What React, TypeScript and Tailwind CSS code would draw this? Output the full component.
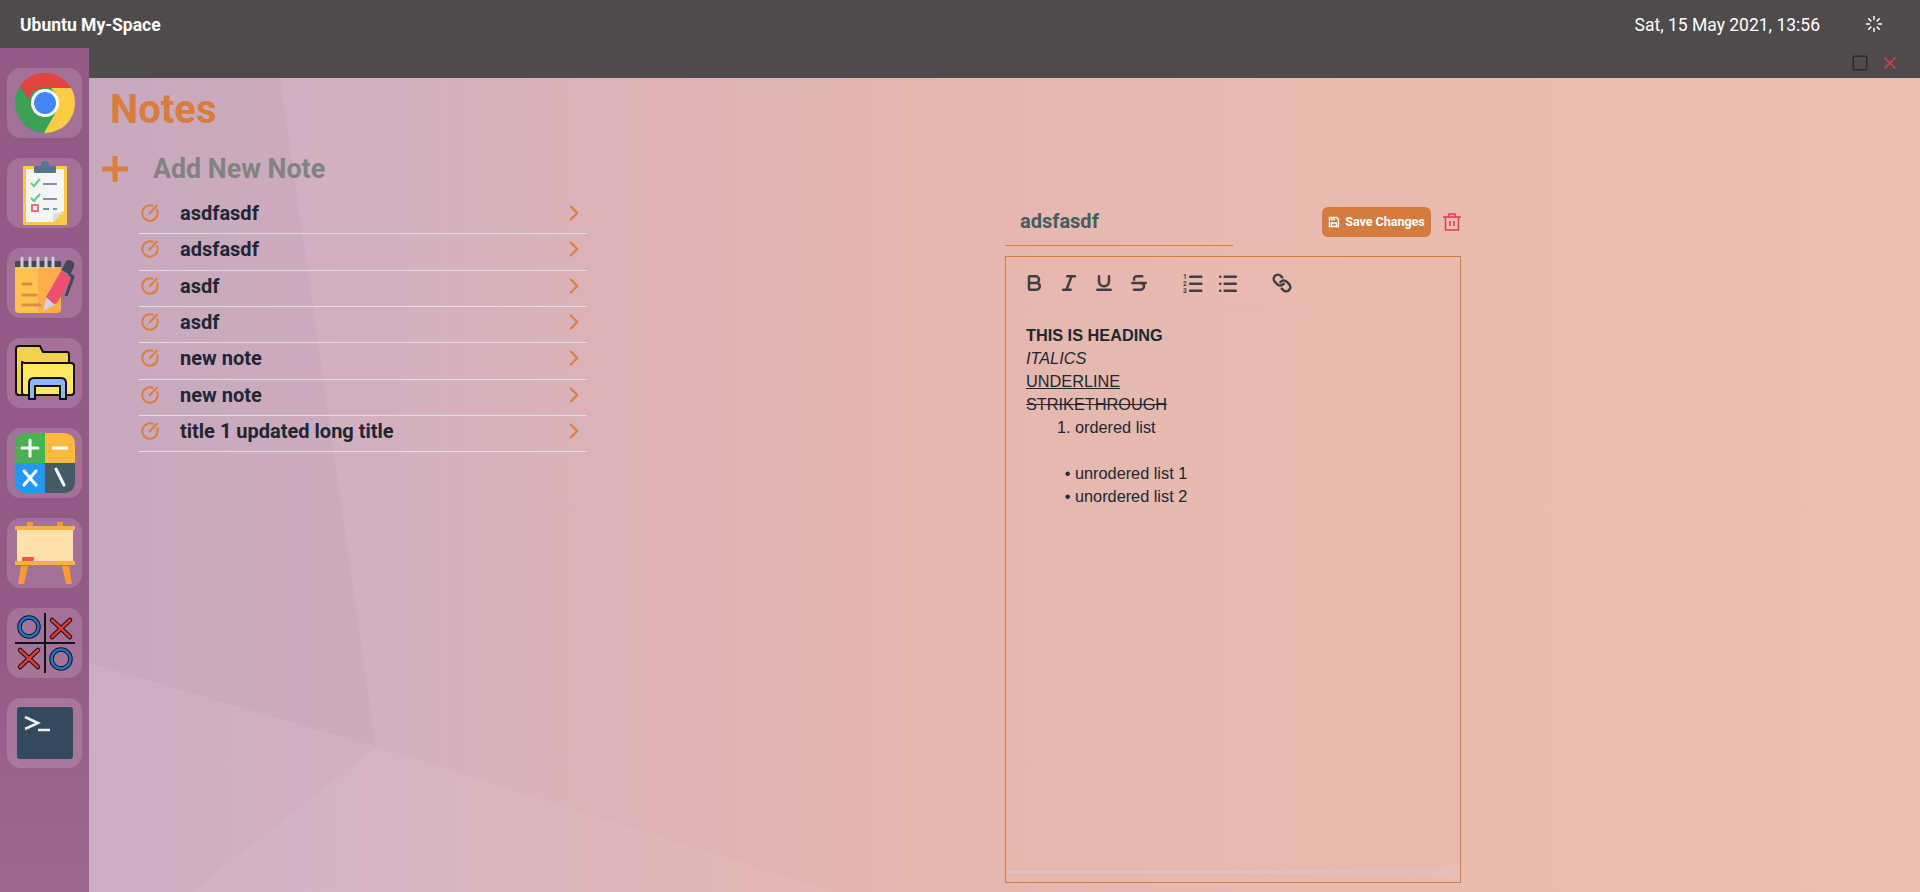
import { Bold, ChevronRight, Italic, Link, Loader, Square, Strikethrough, Underline, X } from 'lucide-react';

const notes = ['asdfasdf', 'adsfasdf', 'asdf', 'asdf', 'new note', 'new note', 'title 1 updated long title'];

function ChromeIcon() {
  return (
    <svg viewBox="0 0 60 60" className="w-[60px] h-[60px]">
      <circle cx="30" cy="30" r="30" fill="#3ba156" />
      <path d="M5 13A30 30 0 0 1 56 15L30 15Q17 15 14 27Z" fill="#e0453f" />
      <path d="M56 15A30 30 0 0 1 29 60L42 37Q46 25 36 15Z" fill="#fecb46" />
      <circle cx="30" cy="30" r="14" fill="#ffffff" />
      <circle cx="30" cy="30" r="11" fill="#4286f5" />
    </svg>
  );
}

function TodoIcon() {
  return (
    <svg viewBox="0 0 60 64" className="w-[60px] h-[64px]">
      <rect x="8" y="5" width="44" height="59" rx="1" fill="#fcc84a" />
      <path d="M11 8H49V50L38 61H11Z" fill="#f5f5f5" />
      <path d="M38 61L49 50V61Z" fill="#f2cf4a" />
      <path d="M38 61V53L49 50Z" fill="#dddddd" />
      <rect x="19" y="5" width="22" height="7" rx="1" fill="#53758f" />
      <circle cx="30" cy="4" r="4" fill="#53758f" />
      <path d="M16 22L19 25L25 18M16 37L19 40L25 33" fill="none" stroke="#53d18a" strokeWidth="2" />
      <path d="M28 23H42M28 38H42M28 48H34M38 48H42" stroke="#53758f" strokeWidth="1.6" />
      <rect x="17" y="44" width="6" height="6" fill="none" stroke="#f26d7d" strokeWidth="2" />
    </svg>
  );
}

function NoteIcon() {
  return (
    <svg viewBox="0 0 60 60" className="w-[60px] h-[60px]">
      <path d="M0 12Q0 8 4 8H23V60H4Q0 60 0 56Z" fill="#fec34e" />
      <path d="M23 8H46V56Q46 60 42 60H23Z" fill="#fdae4b" />
      <path d="M0 14V9Q0 8 4 8H46V14Z" fill="#3f4a54" />
      <path d="M7 5V14M15 5V14M23 5V14M31 5V14M38 5V14" stroke="#c9cfdc" strokeWidth="3" strokeLinecap="round" />
      <path d="M8 31H16M8 42H21M8 52H25" stroke="#dd8b45" strokeWidth="3" strokeLinecap="round" />
      <path d="M33 53L28 58L31 44L46 18L57 25L42 50Z" fill="#ec4f71" />
      <path d="M31 44L28 58L40 52Z" fill="#cfd4e2" />
      <path d="M50 10Q52 5 57 8Q61 10 58 16L55 22L47 17Z" fill="#3f4a54" />
      <path d="M54 21L58 24L51 43" fill="none" stroke="#3f4a54" strokeWidth="3" />
    </svg>
  );
}

function FolderIcon() {
  return (
    <svg viewBox="0 0 60 56" className="w-[60px] h-[56px]">
      <path d="M1 4Q1 1 4 1H25L28 7H52Q54 7 54 10V18H12V50H4Q1 50 1 47Z" fill="#f2d24c" stroke="#111111" strokeWidth="2" />
      <path d="M7 16Q7 18 10 18H56Q59 18 59 21V47Q59 50 56 50H9Q7 50 7 47Z" fill="#fde95f" stroke="#111111" strokeWidth="2" />
      <path d="M14 54V38Q14 33 19 33H46Q51 33 51 38V54H45V41H20V54Z" fill="#8db8f0" stroke="#111111" strokeWidth="2" />
    </svg>
  );
}

function CalcIcon() {
  return (
    <svg viewBox="0 0 60 60" className="w-[60px] h-[60px]">
      <path d="M0 30V12Q0 0 12 0H30V30Z" fill="#4caf50" />
      <path d="M30 0H48Q60 0 60 12V30H30Z" fill="#ffb93f" />
      <path d="M0 30H30V60H12Q0 60 0 48Z" fill="#2397f3" />
      <path d="M30 30H60V48Q60 60 48 60H30Z" fill="#455a64" />
      <path d="M15 7V23M7 15H23M38 15H52M9 38L21 52M21 38L9 52M41 36L49 52" stroke="#ffffff" strokeWidth="3" strokeLinecap="round" />
    </svg>
  );
}

function BoardIcon() {
  return (
    <svg viewBox="0 0 60 62" className="w-[60px] h-[62px]">
      <path d="M12 0H18V8H12ZM42 0H48V8H42Z" fill="#fb9a35" />
      <path d="M6 44L3 62H9L13 44ZM47 44L51 62H57L54 44Z" fill="#fb9a35" />
      <rect x="2" y="8" width="56" height="34" fill="#fde0ab" />
      <rect x="0" y="4" width="60" height="4" fill="#fdb04a" />
      <rect x="0" y="39" width="60" height="4" fill="#fdb04a" />
      <rect x="7" y="35" width="12" height="4" rx="1" fill="#ea5a47" />
    </svg>
  );
}

function TicTacIcon() {
  return (
    <svg viewBox="0 0 60 60" className="w-[60px] h-[60px]">
      <path d="M30 0V60M0 30H60" stroke="#111111" strokeWidth="2" />
      <circle cx="14" cy="14" r="9.5" fill="none" stroke="#111111" strokeWidth="4.5" />
      <circle cx="14" cy="14" r="9.5" fill="none" stroke="#1976d2" strokeWidth="2.5" />
      <circle cx="46" cy="46" r="9.5" fill="none" stroke="#111111" strokeWidth="4.5" />
      <circle cx="46" cy="46" r="9.5" fill="none" stroke="#1976d2" strokeWidth="2.5" />
      <path d="M37 7L55 24M55 7L37 24M5 37L23 54M23 37L5 54" stroke="#111111" strokeWidth="4.5" strokeLinecap="round" />
      <path d="M37 7L55 24M55 7L37 24M5 37L23 54M23 37L5 54" stroke="#e53935" strokeWidth="2.5" strokeLinecap="round" />
    </svg>
  );
}

function TerminalIcon() {
  return (
    <svg viewBox="0 0 56 52" className="w-[56px] h-[52px]">
      <rect width="56" height="52" rx="3" fill="#34495e" />
      <path d="M8 10L21 16L8 22" fill="none" stroke="#ecf0f1" strokeWidth="2.5" />
      <path d="M21 23H33" stroke="#ecf0f1" strokeWidth="2.5" />
    </svg>
  );
}

function NoteMark() {
  return (
    <svg viewBox="0 0 18 18" className="w-[18px] h-[18px] shrink-0" fill="none" stroke="#dd7e3e" strokeWidth="2">
      <path d="M12.5 2.2A7.7 7.7 0 1 0 15.8 5.5" />
      <path d="M8 10L16.5 1" />
    </svg>
  );
}

function SaveMark() {
  return (
    <svg viewBox="0 0 12 12" className="w-[12px] h-[12px]" fill="none" stroke="#ffffff" strokeWidth="1.4">
      <path d="M1.5 1.5H8.5L10.5 3.5V10.5H1.5Z" />
      <path d="M3.5 10.5V7H8.5V10.5" />
      <path d="M3.5 1.5V3.5H7" />
    </svg>
  );
}

function TrashMark() {
  return (
    <svg viewBox="0 0 18 18" className="w-[18px] h-[18px]" fill="none" stroke="#e2394f" strokeWidth="1.5">
      <path d="M0 4H18M6 4V1H12V4M2.5 4V17H15.5V4M7 8V13M11 8V13" />
    </svg>
  );
}

function OrderedMark() {
  return (
    <svg viewBox="0 0 20 22" className="ml-[34px] w-[20px] h-[22px]" fill="#3f3f3f">
      <text x="0" y="7" fontSize="6.5" fontWeight="700" fontFamily="Roboto">1</text>
      <text x="0" y="14" fontSize="6.5" fontWeight="700" fontFamily="Roboto">2</text>
      <text x="0" y="21" fontSize="6.5" fontWeight="700" fontFamily="Roboto">3</text>
      <rect x="6" y="3.5" width="13.5" height="2.4" rx="1" />
      <rect x="6" y="10.5" width="13.5" height="2.4" rx="1" />
      <rect x="6" y="17.5" width="13.5" height="2.4" rx="1" />
    </svg>
  );
}

function BulletMark() {
  return (
    <svg viewBox="0 0 20 20" className="ml-[15px] w-[20px] h-[20px]" fill="#3f3f3f">
      <rect x="1" y="2.5" width="2.4" height="2.4" rx="1" />
      <rect x="1" y="9.5" width="2.4" height="2.4" rx="1" />
      <rect x="1" y="16.5" width="2.4" height="2.4" rx="1" />
      <rect x="5.5" y="2.5" width="13.5" height="2.4" rx="1" />
      <rect x="5.5" y="9.5" width="13.5" height="2.4" rx="1" />
      <rect x="5.5" y="16.5" width="13.5" height="2.4" rx="1" />
    </svg>
  );
}

const apps = [
  <ChromeIcon />,
  <TodoIcon />,
  <NoteIcon />,
  <FolderIcon />,
  <CalcIcon />,
  <BoardIcon />,
  <TicTacIcon />,
  <TerminalIcon />,
];

export default function App() {
  return (
    <div className="relative h-[892px] w-[1920px] overflow-hidden font-['Roboto',sans-serif] bg-[linear-gradient(90deg,#ccaec4_4.6%,#d2b0c0_18.75%,#dbb2b8_31%,#e0b4b3_39.6%,#e6b7ae_51%,#e9bab0_67.7%,#ecbfb2_100%)]">
      {/* wallpaper facets */}
      <svg className="absolute inset-0 w-[1920px] h-[892px]" viewBox="0 0 1920 892">
        <path d="M280 78L376 747L89 663V78Z" fill="#000000" fillOpacity="0.025" />
        <path d="M376 747L835 892H192Z" fill="#ffffff" fillOpacity="0.05" />
      </svg>

      <div className="relative flex h-[48px] items-center justify-between bg-[#4f4b4c] pl-[20px] pr-[37px] pt-[2px] text-white">
        <span className="text-[17.5px] font-bold">Ubuntu My-Space</span>
        <div className="flex items-center gap-[45px]">
          <span className="text-[17.5px]">Sat, 15 May 2021, 13:56</span>
          <Loader size={18} strokeWidth={2} className="-mt-[3px]" />
        </div>
      </div>

      <div className="relative flex h-[844px]">
        <aside className="flex w-[89px] shrink-0 flex-col items-center gap-[20px] bg-[linear-gradient(180deg,#945a87_0%,#945a87_70%,#9e6891_100%)] pt-[20px]">
          {apps.map((icon, i) => (
            <div key={i} className="flex h-[70px] w-[75px] items-center justify-center rounded-[14px] bg-white/15">
              {icon}
            </div>
          ))}
        </aside>

        <div className="flex min-w-0 flex-1 flex-col">
          <div className="flex h-[30px] items-center justify-end gap-[11px] bg-[#4f4b4c] pr-[20px]">
            <Square size={18} strokeWidth={2} className="text-[#2b2b33]" />
            <X size={20} strokeWidth={2} className="text-[#e2394f]" />
          </div>

          <div className="flex flex-1">
            <div className="w-[916px] shrink-0">
              <h1 className="ml-[21px] mt-[7px] text-[40px] font-bold leading-[50px] text-[#d97d3d]">Notes</h1>
              <div className="mt-[12px] flex h-[44px] items-center gap-[25px] pl-[13px]">
                <svg viewBox="0 0 26 26" className="w-[26px] h-[26px]">
                  <path d="M13 0V26M0 13H26" stroke="#dd7e3e" strokeWidth="5" />
                </svg>
                <span className="text-[26.8px] font-bold text-[#828282]">Add New Note</span>
              </div>
              <ul className="ml-[50px] mt-[7px] w-[448px]">
                {notes.map((n, i) => (
                  <li key={i} className="flex h-[36.33px] items-center border-b border-[#dcdfe6] pb-[5px] pl-[2px]">
                    <NoteMark />
                    <span className="ml-[21px] flex-1 text-[20px] font-bold text-[#202733]">{n}</span>
                    <ChevronRight size={26} strokeWidth={2} className="text-[#dd7e3e]" />
                  </li>
                ))}
              </ul>
            </div>

            <div className="mt-[129px] flex w-[456px] shrink-0 flex-col">
              <div className="flex h-[49px] items-start justify-between">
                <div className="flex h-[39px] w-[228px] items-center border-b border-[#d97d3d] pb-[10px] pl-[15px] text-[20px] font-bold leading-none text-[#485a69]">
                  adsfasdf
                </div>
                <div className="flex items-center gap-[12px]">
                  <button className="flex h-[30px] w-[109px] items-center justify-center gap-[5px] rounded-[6px] bg-[#d47b3f] text-[12.5px] font-bold text-white">
                    <SaveMark />
                    Save Changes
                  </button>
                  <TrashMark />
                </div>
              </div>

              <div className="flex h-[627px] flex-col border border-[#d47b3f] pb-[9px]">
                <div className="flex h-[52px] items-center border-b border-[#c8c4b8] pl-[18px] pt-[1px] text-[#3f3f3f]">
                  <Bold size={20} strokeWidth={3} />
                  <Italic size={20} strokeWidth={3} className="ml-[15px]" />
                  <Underline size={20} strokeWidth={3} className="ml-[15px]" />
                  <Strikethrough size={20} strokeWidth={3} className="ml-[15px]" />
                  <OrderedMark />
                  <BulletMark />
                  <Link size={20} strokeWidth={3} className="ml-[34px] -scale-x-100" />
                </div>
                <div className="flex-1 border-b-2 border-[#d8c8c2] pl-[20px] pt-[15px] font-['Liberation_Sans',sans-serif] text-[16.3px] leading-[23px] text-[#202733]">
                  <div className="font-bold">THIS IS HEADING</div>
                  <div className="italic">ITALICS</div>
                  <div className="underline">UNDERLINE</div>
                  <div className="line-through">STRIKETHROUGH</div>
                  <ol className="list-decimal pl-[49px]">
                    <li>ordered list</li>
                  </ol>
                  <div className="h-[23px]" />
                  <ul className="list-['•_'] pl-[49px]">
                    <li>unrodered list 1</li>
                    <li>unordered list 2</li>
                  </ul>
                </div>
              </div>
            </div>
          </div>
        </div>
      </div>
    </div>
  );
}
